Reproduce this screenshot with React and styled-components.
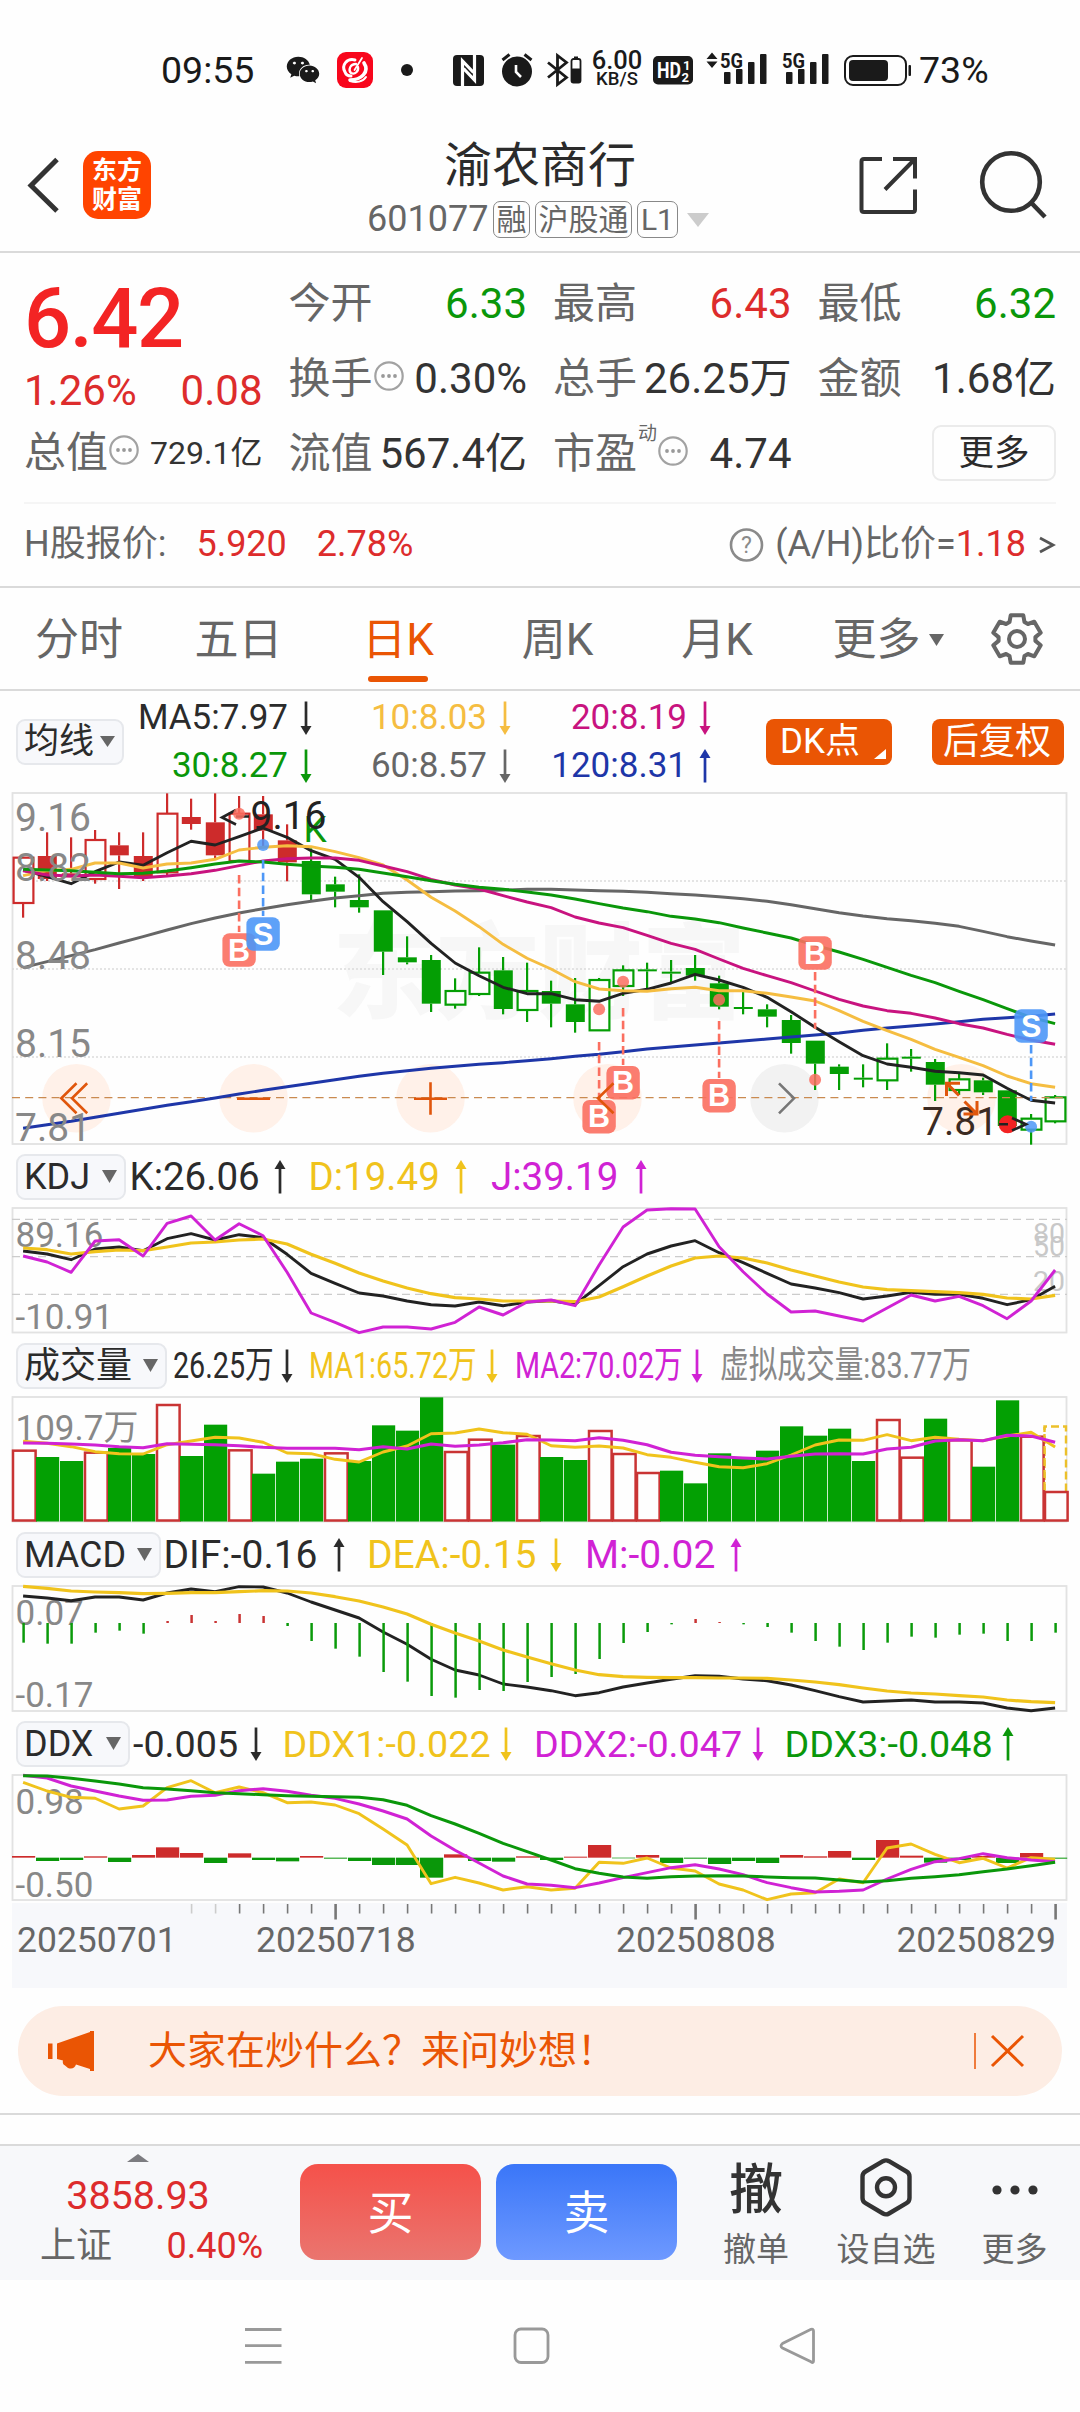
import React from 'react';
import styled, { createGlobalStyle, css } from 'styled-components';
import { FaWeixin } from 'react-icons/fa';

const ORANGE = '#ea5504';
const RED = '#dd2c2c';
const GREEN = '#0a970a';
const DARK = '#2b2b2b';
const GRAY = '#666666';
const YELLOW = '#f0c31c';
const PURPLE = '#d022d4';
const FONT = 'Roboto, "Noto Sans CJK SC", sans-serif';

const GlobalStyle = createGlobalStyle`
  * { box-sizing: border-box; }
  body { margin: 0; background: #fff; }
  svg { display: block; flex: none; overflow: visible; }
  button { font: inherit; border: 0; padding: 0; background: none; }
`;

const Page = styled.div`
  width: 1080px;
  height: 2412px;
  display: flex;
  flex-direction: column;
  background: #fefefe;
  font-family: ${FONT};
  line-height: 1.2;
  color: ${DARK};
  white-space: nowrap;
  overflow: hidden;
`;

/* ---------- status bar ---------- */

const StatusBar = styled.div`
  height: 140px;
  flex: none;
  display: flex;
  align-items: center;
  padding-left: 161px;
  color: #1a1a1a;
`;
const StatusItem = styled.div`
  flex: none;
  width: ${(p) => p.$w}px;
  margin-left: ${(p) => p.$ml || 0}px;
  font-size: 37.500px;
  line-height: 42px;
  display: flex;
  justify-content: flex-start;
`;
const Speed = styled.div`
  flex: none;
  width: 52px;
  margin-left: 8px;
  display: flex;
  flex-direction: column;
  align-items: center;
  font-weight: 500;
`;
const SpeedLine = styled.span`
  font-size: ${(p) => p.$size}px;
  line-height: 19px;
`;

function Signal({ arrows }) {
  const o = arrows ? 14 : 0;
  const bars = [[4, 32], [16, 29], [28, 22], [40, 14]];
  return (
    <svg width={48 + o} height="36" viewBox={`0 0 ${48 + o} 36`}>
      {arrows && <path d="M6 0.5L11.5 7H0.5ZM6 16L11.5 9.500H0.5Z" fill="#1a1a1a" />}
      <text x={o} y="15.500" fontFamily="Roboto" fontWeight="700" fontSize="20.500" textLength="23" lengthAdjust="spacingAndGlyphs" fill="#1a1a1a">5G</text>
      {bars.map(([x, t]) => (
        <rect key={x} x={x + o} y={t - 12} width="6.500" height={44 - t} rx="1" fill="#1a1a1a" />
      ))}
    </svg>
  );
}

function Status() {
  return (
    <StatusBar>
      <StatusItem $w={96}>09:55</StatusItem>
      <StatusItem $w={33} $ml={29}><FaWeixin size={34} /></StatusItem>
      <StatusItem $w={36} $ml={17.500}>
        <svg width="36" height="36" viewBox="0 0 36 36">
          <rect width="36" height="36" rx="9" fill="#f8061c" />
          <g fill="none" stroke="#fff" strokeLinecap="round">
            <path d="M18 8C10 6 4 13 8 20C9 23 12 24 14 24" strokeWidth="3" />
            <path d="M19 12C13 12 11 18 14 21C18 23 22 19 21 15" strokeWidth="2.300" />
            <path d="M25 6L17.500 18" strokeWidth="1.800" />
            <path d="M27 11C33 20 24 28 13 28" strokeWidth="3.600" />
            <path d="M13 29C19 31 26 30 29 25" strokeWidth="2" />
          </g>
        </svg>
      </StatusItem>
      <StatusItem $w={12} $ml={28}>
        <svg width="12" height="12"><circle cx="6" cy="6" r="6" fill="#1a1a1a" /></svg>
      </StatusItem>
      <StatusItem $w={31} $ml={40.500}>
        <svg width="31" height="31" viewBox="0 0 31 31">
          <rect width="31" height="31" rx="4" fill="#1a1a1a" />
          <path d="M9.500 31V6L20.500 17.500M21.500 0V25L10.500 13.500" fill="none" stroke="#fff" strokeWidth="3.200" />
        </svg>
      </StatusItem>
      <StatusItem $w={32} $ml={16.500}>
        <svg width="32" height="34" viewBox="0 0 32 34">
          <circle cx="16" cy="18.500" r="15" fill="#1a1a1a" />
          <path d="M1.500 7L8.500 1.500M30.500 7L23.500 1.500" stroke="#1a1a1a" strokeWidth="3" />
          <path d="M15 12V19L20 24" fill="none" stroke="#fff" strokeWidth="2.600" />
        </svg>
      </StatusItem>
      <StatusItem $w={36} $ml={14.500}>
        <svg width="36" height="34" viewBox="0 0 36 34">
          <path d="M1 9.500L19.500 24.500L10.500 31.500V2.500L19.500 9.500L1 24.500" fill="none" stroke="#1a1a1a" strokeWidth="2.800" />
          <rect x="24.500" y="6" width="9" height="23.500" rx="2" fill="none" stroke="#1a1a1a" strokeWidth="1.800" />
          <rect x="27" y="3.500" width="4" height="2.500" fill="#1a1a1a" />
          <rect x="24.500" y="15.500" width="9" height="14" rx="1" fill="#1a1a1a" />
        </svg>
      </StatusItem>
      <Speed>
        <SpeedLine $size={25.500}>6.00</SpeedLine>
        <SpeedLine $size={18.500}>KB/S</SpeedLine>
      </Speed>
      <StatusItem $w={40} $ml={9.500}>
        <svg width="40" height="29" viewBox="0 0 40 29">
          <rect width="40" height="28.500" rx="5" fill="#1a1a1a" />
          <text x="4" y="22" fontFamily="Roboto" fontWeight="700" fontSize="22" textLength="24" lengthAdjust="spacingAndGlyphs" fill="#fff">HD</text>
          <text x="30" y="14" fontFamily="Roboto" fontWeight="700" fontSize="13" fill="#fff">1</text>
          <text x="28.500" y="25.500" fontFamily="Roboto" fontWeight="700" fontSize="13" fill="#fff">2</text>
        </svg>
      </StatusItem>
      <StatusItem $w={62} $ml={13}><Signal arrows /></StatusItem>
      <StatusItem $w={48} $ml={14}><Signal /></StatusItem>
      <StatusItem $w={68} $ml={14.500}>
        <svg width="68" height="31" viewBox="0 0 68 31">
          <rect x="1" y="1" width="61" height="29" rx="8" fill="none" stroke="#1a1a1a" strokeWidth="2" />
          <rect x="5" y="5" width="39" height="21" rx="4" fill="#1a1a1a" />
          <rect x="64.500" y="10" width="2.500" height="11" rx="1" fill="#1a1a1a" />
        </svg>
      </StatusItem>
      <StatusItem $w={70} $ml={7}>73%</StatusItem>
    </StatusBar>
  );
}

/* ---------- header ---------- */

const Header = styled.header`
  height: 113px;
  flex: none;
  display: flex;
  padding: 0 32.500px 0 26px;
  border-bottom: 2px solid #dadada;
`;
const Brand = styled.div`
  width: 340px;
  display: flex;
  gap: 23px;
  padding-top: 11px;
  align-items: flex-start;
`;
const Logo = styled.div`
  width: 68px;
  height: 68px;
  border-radius: 15px;
  background: #ff4400;
  color: #fff;
  font-size: 25px;
  line-height: 29px;
  font-weight: 700;
  display: flex;
  flex-direction: column;
  align-items: center;
  justify-content: center;
`;
const TitleBlock = styled.div`
  flex: 1;
  display: flex;
  flex-direction: column;
`;
const Title = styled.div`
  font-size: 48px;
  line-height: 52px;
  padding-left: 78px;
`;
const Sub = styled.div`
  display: flex;
  align-items: center;
  margin-top: 9px;
  height: 37px;
  padding-left: 1px;
  font-size: 36px;
  color: ${GRAY};
`;
const Tag = styled.span`
  height: 37px;
  padding: 0 ${(p) => p.$pad || 2.500}px;
  margin-left: ${(p) => p.$ml || 5}px;
  border: 1px solid #888;
  border-radius: 7px;
  font-size: 30px;
  line-height: 35px;
`;
const Tools = styled.div`
  display: flex;
  gap: 60px;
  padding-top: 10px;
`;

function TopBar() {
  return (
    <Header>
      <Brand>
        <svg width="34" height="68" viewBox="0 0 34 68"><path d="M31 8.500L5 34.500L31 60" fill="none" stroke="#333" strokeWidth="5" /></svg>
        <Logo><span>东方</span><span>财富</span></Logo>
      </Brand>
      <TitleBlock>
        <Title>渝农商行</Title>
        <Sub>
          601077
          <Tag $ml={4.500}>融</Tag><Tag>沪股通</Tag><Tag $pad={3}>L1</Tag>
          <svg width="22" height="14" style={{ marginLeft: 9 }}><path d="M0 0H22L11 14Z" fill="#ccc" /></svg>
        </Sub>
      </TitleBlock>
      <Tools>
        <svg width="60" height="70" viewBox="0 0 60 70" fill="none" stroke="#333" strokeWidth="4">
          <path d="M24 9H6Q3.500 9 3.500 11.500V59.500Q3.500 62 6 62H54.500Q57 62 57 59.500V39.500M35 9H57V28.500M56 10L27 39.500" />
        </svg>
        <svg width="70" height="70" viewBox="0 0 70 70" fill="none" stroke="#333" strokeWidth="4.600">
          <circle cx="33" cy="32" r="28.800" /><path d="M53.500 53L67 67" />
        </svg>
      </Tools>
    </Header>
  );
}

/* ---------- quote panel ---------- */

const Quote = styled.section`
  flex: none;
  height: 335px;
  padding: 14px 24px 0;
  border-bottom: 2px solid #dadada;
`;
const QuoteTop = styled.div`
  display: grid;
  grid-template-columns: repeat(4, 238.500px);
  column-gap: 26px;
  height: 237px;
  border-bottom: 2px solid #f5f5f5;
`;
const QuoteCol = styled.div`
  display: flex;
  flex-direction: column;
`;
const Cell = styled.div`
  display: flex;
  align-items: center;
  justify-content: ${(p) => (p.$end ? 'flex-end' : 'space-between')};
  height: ${(p) => p.$h || 75}px;
  font-size: 42px;
  color: ${(p) => p.$color || '#333'};
`;
const Label = styled.span`
  display: flex;
  align-items: center;
  gap: 1px;
  color: ${GRAY};
`;
const Small = styled.span`
  font-size: 32px;
`;
const Sup = styled.sup`
  font-size: 19px;
  line-height: 20px;
  margin-top: -5px;
  align-self: flex-start;
`;
const Price = styled.div`
  height: 99px;
  padding-top: 16px;
  font-size: 83px;
  line-height: 72px;
  letter-spacing: -1.500px;
  font-weight: 500;
  color: #f32424;
`;
const MoreButton = styled.button`
  width: 124px;
  height: 56px;
  border: 2px solid #ebebeb;
  border-radius: 9px;
  font-size: 35.500px;
  color: #2b2b2b;
  line-height: 51px;
`;
const HRow = styled.div`
  height: 81px;
  display: flex;
  align-items: center;
  font-size: 36px;
  color: ${GRAY};
`;
const HValue = styled.span`
  color: ${RED};
  margin-left: ${(p) => p.$ml || 0}px;
`;
const HRight = styled.div`
  margin-left: auto;
  display: flex;
  align-items: center;
`;

const Dots = () => (
  <svg width="32" height="32" viewBox="0 0 32 32" style={{ marginTop: -7 }}>
    <circle cx="15" cy="16" r="13.700" fill="none" stroke="#a2a2a2" strokeWidth="2.200" />
    {[9, 15, 21].map((x) => <circle key={x} cx={x} cy="16" r="1.900" fill="#999" />)}
  </svg>
);

function QuotePanel() {
  return (
    <Quote>
      <QuoteTop>
        <QuoteCol>
          <Price>6.42</Price>
          <Cell $h={50} $color={RED}><span>1.26%</span><span>0.08</span></Cell>
          <Cell><Label>总值<Dots /></Label><Small>729.1亿</Small></Cell>
        </QuoteCol>
        <QuoteCol>
          <Cell $color={GREEN}><Label>今开</Label>6.33</Cell>
          <Cell><Label>换手<Dots /></Label>0.30%</Cell>
          <Cell><Label>流值</Label>567.4亿</Cell>
        </QuoteCol>
        <QuoteCol>
          <Cell $color={RED}><Label>最高</Label>6.43</Cell>
          <Cell><Label>总手</Label>26.25万</Cell>
          <Cell><Label>市盈<Sup>动</Sup><Dots /></Label>4.74</Cell>
        </QuoteCol>
        <QuoteCol>
          <Cell $color={GREEN}><Label>最低</Label>6.32</Cell>
          <Cell><Label>金额</Label>1.68亿</Cell>
          <Cell $end $h={72}><MoreButton>更多</MoreButton></Cell>
        </QuoteCol>
      </QuoteTop>
      <HRow>
        H股报价:
        <HValue $ml={30}>5.920</HValue>
        <HValue $ml={30}>2.78%</HValue>
        <HRight>
          <svg width="34" height="34" viewBox="0 0 34 34">
            <circle cx="16.500" cy="17" r="15.500" fill="none" stroke="#8a8a8a" strokeWidth="2.600" />
            <text x="16.500" y="25" textAnchor="middle" fontFamily="Roboto" fontSize="23" fill="#8a8a8a">?</text>
          </svg>
          <span style={{ marginLeft: 11 }}>(A/H)比价=</span><HValue>1.18</HValue>
          <svg width="18" height="20" viewBox="0 0 18 20" style={{ marginLeft: 12 }}><path d="M2 3L15 10L2 17" fill="none" stroke="#555" strokeWidth="2.800" /></svg>
        </HRight>
      </HRow>
    </Quote>
  );
}

/* ---------- period tabs ---------- */

const Tabs = styled.nav`
  flex: none;
  height: 103px;
  display: flex;
  align-items: center;
  border-bottom: 2px solid #dadada;
  color: ${GRAY};
  font-size: 44px;
`;
const Tab = styled.div`
  position: relative;
  width: 159.500px;
  height: 101px;
  display: flex;
  align-items: center;
  justify-content: center;
  padding: 3px 1.500px 0 0;
  ${(p) => p.$active && css`
    color: ${ORANGE};
    &::after {
      content: '';
      position: absolute;
      left: 50%;
      bottom: 7px;
      width: 60px;
      height: 6px;
      margin-left: -30.500px;
      border-radius: 3px;
      background: ${ORANGE};
    }
  `}
`;
const MoreTab = styled(Tab)`
  width: 191.500px;
  justify-content: flex-start;
  padding-left: 35px;
  gap: 8px;
`;

const Caret = ({ w = 15, h = 12, color = '#666' }) => (
  <svg width={w} height={h} viewBox="0 0 15 12" preserveAspectRatio="none"><path d="M0 0H15L7.500 12Z" fill={color} /></svg>
);

const polar = (r, a) => {
  const t = ((a - 90) * Math.PI) / 180;
  return `${(28 + r * Math.cos(t)).toFixed(1)} ${(27 + r * Math.sin(t)).toFixed(1)}`;
};
const gearPath = 'M' + [0, 60, 120, 180, 240, 300]
  .flatMap((a) => [polar(18.500, a - 24), polar(24.500, a - 15), polar(24.500, a + 15), polar(18.500, a + 24)])
  .join('L') + 'Z';

function PeriodTabs() {
  return (
    <Tabs>
      <Tab>分时</Tab><Tab>五日</Tab><Tab $active>日K</Tab><Tab>周K</Tab><Tab>月K</Tab>
      <MoreTab>更多<Caret /></MoreTab>
      <svg width="54" height="54" viewBox="0 0 54 54" fill="none" stroke="#666" strokeWidth="4" strokeLinejoin="round">
        <path d={gearPath} /><circle cx="28" cy="27" r="8" />
      </svg>
    </Tabs>
  );
}

/* ---------- indicator headers ---------- */

const Arrow = ({ up, color }) => (
  <svg width="12" height="34" viewBox="0 0 12 34">
    <g transform={up ? undefined : 'rotate(180 6 17)'}>
      <path d="M6 5V33.500" stroke={color} strokeWidth="2.700" />
      <path d="M6 0L11.500 9H0.5Z" fill={color} />
    </g>
  </svg>
);

const Picker = styled.button`
  flex: none;
  width: ${(p) => p.$w}px;
  height: 46px;
  display: flex;
  align-items: center;
  justify-content: space-between;
  padding: 0 7px 0 6px;
  border: 2px solid #e6e8ec;
  border-radius: 9px;
  background: #f7f8fb;
  color: ${DARK};
  font-family: ${FONT};
  font-size: ${(p) => p.$size || 36}px;
  line-height: 42px;
`;
const MaBar = styled.div`
  flex: none;
  height: 101px;
  display: flex;
  align-items: center;
  padding: 0 16px;
`;
const MaGrid = styled.div`
  display: grid;
  grid-template-columns: 188px 199px 200px;
  grid-auto-rows: 48px;
  flex: none;
  padding-top: 1px;
`;
const MaItem = styled.div`
  display: flex;
  align-items: center;
  justify-content: flex-end;
  gap: 12px;
  font-size: 35px;
  color: ${(p) => p.$color};
`;
const Pill = styled.button`
  position: relative;
  width: ${(p) => p.$w}px;
  height: 46px;
  margin-left: ${(p) => p.$ml}px;
  border-radius: 8px;
  background: ${ORANGE};
  color: #fff;
  font-size: ${(p) => p.$size}px;
  line-height: 46px;
  text-align: left;
  padding-left: ${(p) => p.$pad}px;
`;
const Corner = styled.span`
  position: absolute;
  right: 6px;
  bottom: 6px;
  border-left: 12px solid transparent;
  border-bottom: 10px solid #fff;
`;

const MAS = [
  ['MA5:7.97', DARK, false], ['10:8.03', '#f5bd41', false], ['20:8.19', '#c8137f', false],
  ['30:8.27', GREEN, false], ['60:8.57', GRAY, false], ['120:8.31', '#1e36a8', true],
];

function MaHeader() {
  return (
    <MaBar>
      <Picker $w={108} $size={35}>均线<Caret h={11} /></Picker>
      <MaGrid>
        {MAS.map(([t, c, up]) => <MaItem key={t} $color={c}>{t}<Arrow up={up} color={c} /></MaItem>)}
      </MaGrid>
      <Pill $w={126} $ml={55} $pad={14} $size={35}>DK点<Corner /></Pill>
      <Pill $w={132} $ml={40} $pad={11} $size={36}>后复权</Pill>
    </MaBar>
  );
}

const IndicatorBar = styled.div`
  flex: none;
  height: 60px;
  display: flex;
  align-items: center;
  padding: 1px 0 0 16px;
`;
const Reading = styled.div`
  flex: none;
  width: ${(p) => p.$w}px;
  margin-left: ${(p) => p.$ml}px;
  display: flex;
  align-items: center;
  justify-content: space-between;
  color: ${(p) => p.$color};
  font-size: ${(p) => p.$size}px;
  line-height: 44px;
`;
const Value = styled.span`
  width: 0;
  flex: 1;
  transform-origin: 0 50%;
  transform: ${(p) => (p.$narrow ? 'scaleX(0.775)' : 'none')};
`;

function Indicator({ name, w, narrow, size = 38.5, items }) {
  return (
    <IndicatorBar>
      <Picker $w={w}>{name}<Caret h={13} /></Picker>
      {items.map(([text, color, dir, ml, width]) => (
        <Reading key={text} $color={color} $ml={ml} $w={width} $size={size}>
          <Value $narrow={narrow}>{text}</Value>
          {dir && <Arrow up={dir === 'up'} color={color} />}
        </Reading>
      ))}
    </IndicatorBar>
  );
}

/* ---------- charts ---------- */

const X = (i) => 23.1 + 24 * i;
const poly = (off, values) => values.map((v, i) => `${X(i).toFixed(1)},${(off + v / 3).toFixed(1)}`).join(' ');

const Line = ({ off, values, color, w = 2.900 }) => (
  <polyline points={poly(off, values)} fill="none" stroke={color} strokeWidth={w} strokeLinejoin="round" />
);
const Frame = ({ y, h }) => <rect x="12.500" y={y} width="1054" height={h} fill="none" stroke="#e2e2e2" strokeWidth="1.800" />;
const AxisText = ({ x = 15.500, y, size = 35, color = '#888', children }) => (
  <text x={x} y={y} fontFamily={FONT} fontSize={size} fill={color}>{children}</text>
);

// kind, body top, body bottom, high, low
const CANDLES = [
  ['rh', 233, 369, 233, 413], ['rs', 228, 297, 157, 303], ['rs', 280, 292, 172, 292], ['rh', 180, 297, 150, 311],
  ['rs', 196, 226, 157, 327], ['rs', 228, 292, 157, 303], ['rh', 101, 277, 40, 288], ['rs', 111, 132, 56, 149],
  ['rs', 127, 226, 40, 240], ['rh', 101, 243, 48, 243], ['rs', 103, 152, 48, 200], ['rs', 181, 247, 133, 304],
  ['gs', 243, 343, 205, 360], ['gs', 313, 335, 290, 382], ['gs', 360, 382, 283, 398], ['gs', 391, 515, 391, 585],
  ['gs', 532, 547, 469, 553], ['gs', 540, 671, 525, 696], ['gh', 633, 674, 595, 686], ['gh', 578, 642, 502, 648],
  ['gs', 571, 687, 531, 703], ['gh', 633, 690, 548, 726], ['gs', 633, 671, 602, 742], ['gs', 673, 726, 594, 758],
  ['gh', 600, 751, 594, 751], ['gh', 571, 618, 556, 648], ['gs', 568, 574, 548, 628], ['gs', 575, 581, 540, 609],
  ['gs', 564, 587, 525, 602], ['gs', 610, 680, 587, 688], ['gs', 681, 687, 633, 703], ['gs', 688, 710, 673, 742],
  ['gs', 720, 789, 705, 821], ['gs', 782, 851, 782, 930], ['gs', 860, 882, 853, 930], ['gs', 893, 899, 853, 922],
  ['gh', 836, 901, 790, 930], ['gs', 830, 836, 807, 875], ['gs', 846, 914, 837, 963], ['gh', 898, 930, 882, 945],
  ['gs', 901, 937, 893, 945], ['gs', 931, 1038, 931, 1038], ['gh', 1016, 1049, 1002, 1094], ['gh', 952, 1024, 945, 1030],
];
const MA5 = [270, 290, 311, 275, 246, 256, 218, 184, 195, 170, 144, 172, 212, 238, 292, 365, 425, 490, 549, 587, 622, 641, 641, 659, 664, 640, 628, 609, 583, 600, 622, 652, 695, 742, 785, 827, 852, 862, 874, 878, 885, 925, 961, 969];
const MA10 = [287, 272, 268, 249, 249, 264, 252, 249, 238, 210, 202, 197, 200, 215, 233, 255, 300, 352, 393, 440, 493, 535, 567, 605, 627, 632, 634, 626, 622, 632, 632, 640, 651, 663, 692, 724, 752, 778, 808, 832, 857, 888, 911, 922];
const MA20 = [272, 285, 288, 285, 289, 293, 288, 281, 271, 257, 243, 236, 234, 234, 241, 258, 275, 298, 315, 327, 347, 366, 383, 411, 429, 443, 466, 490, 508, 537, 565, 587, 608, 633, 658, 678, 692, 700, 714, 731, 744, 763, 780, 793];
const MA30 = [268, 270, 272, 277, 281, 280, 273, 263, 252, 243, 246, 253, 258, 262, 268, 279, 290, 302, 313, 322, 328, 336, 345, 357, 371, 384, 395, 409, 417, 428, 444, 459, 474, 496, 516, 538, 562, 586, 608, 634, 659, 686, 712, 731];
const MA60 = [563, 545, 527, 509, 489, 470, 450, 431, 414, 399, 386, 374, 364, 354, 347, 340, 337, 335, 333, 332, 330, 328, 328, 330, 332, 334, 337, 341, 345, 350, 356, 364, 374, 386, 398, 408, 416, 422, 430, 439, 454, 470, 483, 495];
const MA120 = [1045, 1034, 1024, 1012, 1000, 988, 976, 965, 954, 942, 931, 920, 910, 899, 889, 880, 872, 865, 859, 853, 848, 842, 836, 829, 823, 815, 807, 801, 795, 789, 783, 777, 771, 765, 759, 751, 744, 738, 732, 725, 718, 713, 709, 702];

const Candle = ({ i, d: [kind, top, bot, hi, lo] }) => {
  const y = (v) => 780 + v / 3;
  const c = kind[0] === 'r' ? '#cd2b2b' : '#049e04';
  const x = X(i);
  const hollow = kind[1] === 'h';
  return (
    <g>
      {hi < top && <path d={`M${x} ${y(hi)}V${y(top)}`} stroke={c} strokeWidth="2.200" />}
      {lo > bot && <path d={`M${x} ${y(bot)}V${y(lo)}`} stroke={c} strokeWidth="2.200" />}
      {hollow
        ? <rect x={x - 9.500} y={y(top)} width="19.800" height={(bot - top) / 3} fill="#fefefe" stroke={c} strokeWidth="2.200" />
        : <rect x={x - 9.300} y={y(top)} width="19" height={(bot - top) / 3} fill={c} />}
    </g>
  );
};

const MARKER_RED = '#fb6f60';
const MARKER_BLUE = '#4d97f7';
// letter, x, badge centre y, dash start, dash end, dot y
const MARKERS = [
  ['B', 239.1, 950, 875, 932, 813.700], ['S', 263.1, 934, 860, 916, 845],
  ['B', 599.1, 1116.700, 1042, 1099, 1009.300], ['B', 623.1, 1082.700, 1008, 1065, 981.700],
  ['B', 719.1, 1095.700, 1021, 1078, 999.700], ['B', 815.1, 953, 972, 1029, 1079.700],
  ['S', 1031.1, 1026, 1045, 1101, 1126.700],
];
const Marker = ({ d: [l, x, cy, y1, y2, dot] }) => {
  const c = l === 'B' ? MARKER_RED : MARKER_BLUE;
  return (
    <g>
      <path d={`M${x} ${y1}V${y2}`} stroke={c} strokeWidth="2.600" strokeDasharray="8.500 4.200" />
      <circle cx={x} cy={dot} r="6" fill={c} fillOpacity="0.85" />
      <rect x={x - 16.700} y={cy - 16.700} width="33.400" height="33.400" rx="7" fill={c} fillOpacity="0.9" />
      <text x={x} y={cy + 10.600} textAnchor="middle" fontFamily="Liberation Sans, sans-serif" fontWeight="700" fontSize="30.500" fill="#fff">{l}</text>
    </g>
  );
};

function KChart() {
  const y = (v) => 780 + v / 3;
  return (
    <svg width="1080" height="354" viewBox="0 792 1080 354">
      <text x="333" y="1010" fontFamily={FONT} fontWeight="700" fontSize="103" fill="#f7f7f7" stroke="#f7f7f7" strokeWidth="2">东方财富</text>
      <Frame y={793} h={351} />
      {[303, 567, 831].map((v) => <path key={v} d={`M12 ${y(v)}H1067`} stroke="#dcdcdc" strokeWidth="1.300" strokeDasharray="2 2" />)}
      {[76.500, 253.500, 430.500, 607.500, 784.500, 961.500].map((cx, i) => (
        <circle key={cx} cx={cx} cy="1098.300" r="34.300" fill={i === 4 ? '#f2f2f2' : '#fff1e9'} />
      ))}
      {CANDLES.map((d, i) => <Candle key={i} i={i} d={d} />)}
      <path d="M12 1097.700H1067" stroke="#c98a50" strokeWidth="1.300" strokeDasharray="8 5.200" />
      <Line off={780} values={MA120} color="#1e36a8" />
      <Line off={780} values={MA60} color="#666" />
      <Line off={780} values={MA5} color="#222" />
      <Line off={780} values={MA10} color="#f5bd41" />
      <Line off={780} values={MA20} color="#c8137f" />
      <Line off={780} values={MA30} color="#0a970a" />
      {[['9.16', 830.500], ['8.82', 881], ['8.48', 969], ['8.15', 1057], ['7.81', 1140.500]].map(([t, ty]) => (
        <AxisText key={t} y={ty} x={15} size={39}>{t}</AxisText>
      ))}
      <AxisText x={303.500} y={842} size={37} color="#0a970a">K</AxisText>
      <path d="M236 810L222 817.500L236 824.500M236 816.500H249" fill="none" stroke="#222" strokeWidth="2.600" />
      <AxisText x={250.500} y={829} size={39} color="#222">9.16</AxisText>
      {MARKERS.map((d, i) => <Marker key={i} d={d} />)}
      <AxisText x={922} y={1135} size={39} color="#3b2a22">7.81</AxisText>
      <circle cx="1007.700" cy="1124.300" r="9" fill="#f32222" />
      <path d="M999 1124.300H1008M1012 1118L1026 1124.300L1012 1130.500" fill="none" stroke="#222" strokeWidth="2.600" />
      <g fill="none" stroke="#e0560c" strokeWidth="2.600">
        <path d="M76.500 1083.300L61.300 1098.300L76.500 1113.300M87.200 1083.300L72 1098.300L87.200 1113.300" />
        <path d="M237 1098.700H270M414 1098.700H447M430.500 1082.300V1114.700" />
        <path d="M613.500 1083.300L598 1098.300L613.500 1113.300" />
        <path d="M946.500 1096V1083.300H960M947 1083.600L959 1095.500M977 1101V1114H963.500M964.500 1101.500L976.500 1113.500" strokeWidth="3" />
      </g>
      <path d="M779 1083.300L794 1098.300L779 1113.300" fill="none" stroke="#777" strokeWidth="2.600" />
    </svg>
  );
}

const KDJ_K = [303, 312, 329, 297, 291, 302, 266, 251, 270, 254, 263, 313, 370, 400, 429, 438, 453, 464, 468, 456, 467, 456, 452, 463, 407, 350, 312, 288, 272, 308, 338, 370, 402, 414, 428, 447, 438, 427, 433, 433, 445, 464, 449, 409];
const KDJ_D = [294, 299, 312, 305, 300, 302, 291, 279, 276, 270, 267, 282, 313, 340, 369, 393, 414, 431, 443, 447, 453, 453, 453, 455, 441, 410, 378, 348, 324, 318, 324, 339, 360, 378, 396, 411, 419, 422, 425, 428, 433, 444, 447, 436];
const KDJ_J = [318, 336, 367, 273, 269, 318, 220, 198, 270, 221, 257, 367, 489, 517, 548, 531, 531, 537, 517, 471, 495, 456, 450, 467, 345, 231, 180, 176, 177, 290, 365, 432, 486, 483, 498, 513, 474, 435, 453, 439, 467, 506, 453, 360];

function KdjChart() {
  return (
    <svg width="1080" height="129" viewBox="0 1206 1080 129">
      <Frame y={1208} h={124.500} />
      {[208, 320, 433].map((v) => <path key={v} d={`M12 ${1150 + v / 3}H1067`} stroke="#ccc" strokeWidth="1.200" strokeDasharray="8 5" />)}
      <AxisText y={1247}>89.16</AxisText>
      <AxisText y={1328.700}>-10.91</AxisText>
      {[['80', 1242.500], ['50', 1256], ['20', 1290.500]].map(([t, y]) => <AxisText key={t} x={1033} y={y} size={28.500} color="#c8c8c8">{t}</AxisText>)}
      <Line off={1150} values={KDJ_K} color="#222" />
      <Line off={1150} values={KDJ_D} color={YELLOW} w={3.200} />
      <Line off={1150} values={KDJ_J} color={PURPLE} />
    </svg>
  );
}

const VOL = 'r332 g351 g363 r338 g324 g342 r195 g348 g254 r331 g401 g365 g356 r340 g363 g256 g272 g172 r336 r299 g314 r288 g351 g360 r273 r342 r399 g392 g430 g340 g352 g332 g259 g287 g266 g363 r240 r353 g236 r301 g380 g181 r290 r456'.split(' ');
const VMA1 = [304, 310, 320, 335, 341, 342, 314, 303, 292, 294, 307, 339, 341, 358, 366, 336, 318, 281, 279, 267, 278, 283, 317, 322, 318, 324, 344, 352, 367, 380, 383, 371, 345, 315, 300, 301, 284, 302, 292, 298, 302, 288, 277, 321];
const VMA2 = [309, 310, 312, 315, 320, 323, 311, 313, 314, 317, 322, 325, 325, 325, 329, 320, 327, 312, 319, 315, 308, 299, 300, 302, 293, 301, 314, 337, 346, 350, 354, 357, 349, 342, 341, 342, 327, 322, 303, 299, 302, 286, 288, 307];

function VolumeChart() {
  const base = 1340 + 543 / 3;
  return (
    <svg width="1080" height="129" viewBox="0 1395 1080 129">
      <Frame y={1397} h={124.500} />
      <AxisText y={1440}>109.7万</AxisText>
      <path d="M1044.500 1492V1426.500H1066V1492" fill="#fefefe" stroke="#ecc02a" strokeWidth="2.400" strokeDasharray="8 4" />
      {VOL.map((s, i) => {
        const top = 1340 + Number(s.slice(1)) / 3;
        const x = 12 + i * 24;
        return s[0] === 'g'
          ? <rect key={i} x={x} y={top} width="23.200" height={base - top + 0.500} fill="#03a003" />
          : <rect key={i} x={x + 1} y={top} width="22.600" height={base - top - 0.500} fill="#fefefe" stroke="#c93434" strokeWidth="2.500" />;
      })}
      <path d="M1044.500 1490V1427" fill="none" stroke="#ecc02a" strokeWidth="2.400" strokeDasharray="8 4" />
      <Line off={1340} values={VMA1} color={YELLOW} />
      <Line off={1340} values={VMA2} color={PURPLE} w={3.100} />
    </svg>
  );
}

const HIST = [338, 341, 341, 308, 302, 311, 273, 255, 273, 252, 258, 288, 333, 356, 380, 426, 455, 498, 503, 480, 483, 456, 441, 432, 387, 339, 306, 283, 267, 276, 283, 291, 308, 333, 350, 360, 338, 320, 323, 314, 311, 333, 333, 308];
const DIF = [198, 204, 212, 201, 201, 210, 189, 177, 185, 170, 171, 189, 216, 240, 264, 306, 343, 388, 420, 435, 462, 471, 482, 497, 488, 471, 459, 448, 437, 439, 447, 452, 465, 482, 500, 516, 513, 510, 516, 516, 519, 534, 542, 534];
const DEA = [169, 175, 183, 186, 188, 191, 190, 188, 188, 185, 182, 183, 189, 200, 213, 231, 252, 283, 309, 333, 360, 381, 401, 420, 434, 440, 442, 443, 443, 444, 444, 445, 450, 456, 464, 474, 483, 489, 492, 497, 501, 510, 515, 518];

function MacdChart() {
  return (
    <svg width="1080" height="129" viewBox="0 1584 1080 129">
      <Frame y={1586} h={125} />
      <AxisText y={1625}>0.07</AxisText>
      <AxisText y={1707}>-0.17</AxisText>
      <Line off={1530} values={DIF} color="#222" />
      {HIST.map((v, i) => (
        <path key={i} d={`M${X(i) + 0.500} ${1530 + 279 / 3}V${1530 + v / 3}`} stroke={v < 279 ? '#c93434' : '#0a9a0a'} strokeWidth="2.500" />
      ))}
      <Line off={1530} values={DEA} color={YELLOW} w={3.200} />
    </svg>
  );
}

const DDX_BARS = [438, 453, 450, 439, 456, 435, 412, 429, 459, 430, 450, 454, 438, 446, 453, 465, 465, 503, 433, 453, 455, 439, 450, 440, 405, 445, 435, 459, 446, 462, 453, 459, 435, 439, 423, 450, 390, 437, 458, 450, 438, 459, 429, 446];
const DDX1 = [217, 243, 262, 265, 297, 288, 233, 212, 248, 231, 248, 278, 276, 285, 311, 357, 405, 521, 502, 519, 540, 530, 540, 535, 457, 460, 444, 474, 483, 522, 540, 569, 552, 548, 507, 518, 414, 402, 433, 458, 445, 474, 443, 448];
const DDX2 = [196, 204, 228, 243, 258, 271, 270, 259, 256, 242, 236, 244, 256, 265, 282, 303, 327, 378, 421, 459, 498, 522, 526, 533, 519, 503, 488, 473, 464, 477, 494, 518, 533, 546, 544, 540, 507, 478, 455, 446, 431, 443, 450, 455];
const DDX3 = [197, 198, 205, 213, 222, 233, 237, 242, 248, 251, 254, 257, 259, 260, 262, 269, 286, 317, 342, 370, 400, 425, 450, 476, 490, 501, 505, 500, 498, 497, 498, 501, 503, 504, 510, 516, 512, 505, 500, 494, 485, 477, 467, 457];

function DdxChart() {
  return (
    <svg width="1080" height="130" viewBox="0 1773 1080 130">
      <Frame y={1775} h={125} />
      <AxisText y={1813.500}>0.98</AxisText>
      <AxisText y={1897}>-0.50</AxisText>
      {DDX_BARS.map((v, i) => (
        <rect key={i} x={12 + 24 * i} y={1710 + Math.min(v, 443) / 3} width="23.200" height={Math.abs(v - 443) / 3} fill={v < 443 ? '#cd2b2b' : '#0a970a'} />
      ))}
      <Line off={1710} values={DDX1} color={YELLOW} />
      <Line off={1710} values={DDX2} color={PURPLE} />
      <Line off={1710} values={DDX3} color="#0a970a" w={3} />
    </svg>
  );
}

const Timeline = styled.div`
  flex: none;
  width: 1055px;
  height: 85px;
  margin-left: 12px;
  background: #f7f8fb;
`;
const Dates = styled.div`
  display: grid;
  grid-template-columns: 239px 360px 1fr auto;
  padding: 0 11px 0 5px;
  margin-top: -1px;
  font-size: 35.500px;
  line-height: 40px;
  color: ${GRAY};
`;

function DateAxis() {
  return (
    <Timeline>
      <svg width="1055" height="18" viewBox="12 0 1055 18">
        {Array.from({ length: 37 }, (_, k) => k + 7).map((i) => {
          const major = (i - 13) % 15 === 0;
          return <path key={i} d={`M${X(i) + 0.500} 1V${major ? 16.500 : 10.500}`} stroke={i < 9 ? '#ccc' : '#777'} strokeWidth={major ? 2.600 : 1.600} />;
        })}
      </svg>
      <Dates><span>20250701</span><span>20250718</span><span>20250808</span><span>20250829</span></Dates>
    </Timeline>
  );
}

/* ---------- promo and bottom bar ---------- */

const PromoWrap = styled.div`
  flex: none;
  height: 127px;
  padding: 18px 18.500px 0 18px;
  border-bottom: 2px solid #dadada;
`;
const Promo = styled.div`
  height: 90px;
  border-radius: 45px;
  background: #fdede4;
  color: ${ORANGE};
  display: flex;
  align-items: center;
  font-size: 39px;
  padding: 0 38px 0 30px;
`;
const PromoText = styled.span`
  flex: 1;
  padding-left: 54px;
  line-height: 46px;
`;
const Gap = styled.div`
  flex: none;
  height: 29px;
`;
const BottomBar = styled.footer`
  flex: none;
  height: 136px;
  border-top: 2px solid #dadada;
  background: #f7f8fa;
  display: flex;
`;
const IndexBlock = styled.div`
  width: 300px;
  display: flex;
  flex-direction: column;
  padding: 8px 37px 0 40px;
`;
const IndexTop = styled.div`
  width: 196px;
  display: flex;
  flex-direction: column;
  align-items: center;
  gap: 10px;
  color: ${RED};
  font-size: 39.500px;
  line-height: 48px;
`;
const IndexRow = styled.div`
  display: flex;
  justify-content: space-between;
  color: ${RED};
  font-size: 36px;
  line-height: 48px;
  padding-top: 2px;
`;
const TradeButton = styled.button`
  width: 181px;
  height: 96px;
  margin: 18px 15px 0 0;
  border-radius: 18px;
  color: #fff;
  font-size: 46px;
  line-height: 99px;
  background: linear-gradient(${(p) => p.$from}, ${(p) => p.$to});
`;
const Action = styled.div`
  width: ${(p) => p.$w}px;
  margin-left: ${(p) => p.$ml || 0}px;
  display: flex;
  flex-direction: column;
  align-items: center;
`;
const ActionIcon = styled.div`
  height: 84px;
  display: flex;
  align-items: center;
  color: #333;
  font-size: 54px;
  font-weight: 500;
  line-height: 84px;
`;
const ActionGlyph = styled.span`
  padding-top: 5px;
`;
const ActionLabel = styled.div`
  color: ${GRAY};
  font-size: 33px;
  line-height: 40px;
`;
const SystemNav = styled.div`
  flex: none;
  height: 132px;
  display: flex;
  align-items: center;
  padding: 0 0 0 244px;
`;

function Bottom() {
  return (
    <BottomBar>
      <IndexBlock>
        <IndexTop>
          <svg width="22" height="8"><path d="M0 8H22L11 0Z" fill="#7c7c80" /></svg>
          <span>3858.93</span>
        </IndexTop>
        <IndexRow><Label>上证</Label><span>0.40%</span></IndexRow>
      </IndexBlock>
      <TradeButton $from="#f5514a" $to="#ea756f">买</TradeButton>
      <TradeButton $from="#3a76f8" $to="#6e99ff">卖</TradeButton>
      <Action $w={66} $ml={31}>
        <ActionIcon><ActionGlyph>撤</ActionGlyph></ActionIcon><ActionLabel>撤单</ActionLabel>
      </Action>
      <Action $w={100} $ml={47}>
        <ActionIcon>
          <svg width="56" height="62" viewBox="0 0 56 62" fill="none" stroke="#333" strokeWidth="4.400" strokeLinejoin="round">
            <path d="M25 4.200Q28 2.600 31 4.200L48.500 14.500Q51.500 16.300 51.500 19.500V41Q51.500 44.500 48.500 46.200L31 56.500Q28 58.200 25 56.500L7.500 46.200Q4.500 44.500 4.500 41V19.500Q4.500 16.300 7.500 14.500Z" />
            <circle cx="28" cy="30.300" r="9" />
          </svg>
        </ActionIcon>
        <ActionLabel>设自选</ActionLabel>
      </Action>
      <Action $w={66} $ml={45.500}>
        <ActionIcon>
          <svg width="48" height="10" style={{ marginTop: 4 }}>{[6, 24, 42].map((x) => <circle key={x} cx={x} cy="5" r="4.600" fill="#333" />)}</svg>
        </ActionIcon>
        <ActionLabel>更多</ActionLabel>
      </Action>
    </BottomBar>
  );
}

export default function App() {
  return (
    <Page>
      <GlobalStyle />
      <Status />
      <TopBar />
      <QuotePanel />
      <PeriodTabs />
      <MaHeader />
      <KChart />
      <Indicator name="KDJ" w={110} items={[
        ['K:26.06', DARK, 'up', 3.500, 156.500], ['D:19.49', YELLOW, 'up', 22.500, 158.500], ['J:39.19', PURPLE, 'up', 24, 156],
      ]} />
      <KdjChart />
      <Indicator name="成交量" w={151} narrow size={37} items={[
        ['26.25万', DARK, 'down', 5.500, 120.500], ['MA1:65.72万', YELLOW, 'down', 15.500, 189.500],
        ['MA2:70.02万', PURPLE, 'down', 16.500, 188.500], ['虚拟成交量:83.77万', '#888', null, 17, 260],
      ]} />
      <VolumeChart />
      <Indicator name="MACD" w={145} size={39} items={[
        ['DIF:-0.16', DARK, 'up', 2.500, 181.500], ['DEA:-0.15', YELLOW, 'down', 22, 195], ['M:-0.02', PURPLE, 'up', 23, 157],
      ]} />
      <MacdChart />
      <Indicator name="DDX" w={113.500} size={37.700} items={[
        ['-0.005', DARK, 'down', 3.500, 128.500], ['DDX1:-0.022', YELLOW, 'down', 21, 229.500],
        ['DDX2:-0.047', PURPLE, 'down', 22, 229.500], ['DDX3:-0.048', GREEN, 'up', 21, 229.500],
      ]} />
      <DdxChart />
      <DateAxis />
      <PromoWrap>
        <Promo>
          <svg width="46" height="40" viewBox="0 0 46 40">
            <path d="M0 12.500H4.500V28H0ZM9 12.500L42 1V0H46V40H42V38L28 33.500Q26 39 20 37L17 34.500Q14 33 15 29.500L9 28Z" fill={ORANGE} />
          </svg>
          <PromoText>大家在炒什么？来问妙想！</PromoText>
          <svg width="50" height="36" viewBox="0 0 50 36" fill="none" stroke={ORANGE}>
            <path d="M1 0V36" strokeWidth="1.500" /><path d="M18 3L49 33M49 3L18 33" strokeWidth="3" />
          </svg>
        </Promo>
      </PromoWrap>
      <Gap />
      <Bottom />
      <SystemNav>
        <svg width="572" height="38" viewBox="244 2327 572 38" fill="none" stroke="#999" strokeWidth="2.800">
          <path d="M245 2329.500H281.500M245 2345.700H281.500M245 2362.300H281.500" />
          <rect x="515" y="2329" width="33" height="33.500" rx="6" />
          <path d="M811 2329.300Q813.500 2328.500 813.500 2331V2361Q813.500 2363.500 811 2361.800L782.500 2348Q779.500 2346 782.500 2343.500Z" />
        </svg>
      </SystemNav>
    </Page>
  );
}
